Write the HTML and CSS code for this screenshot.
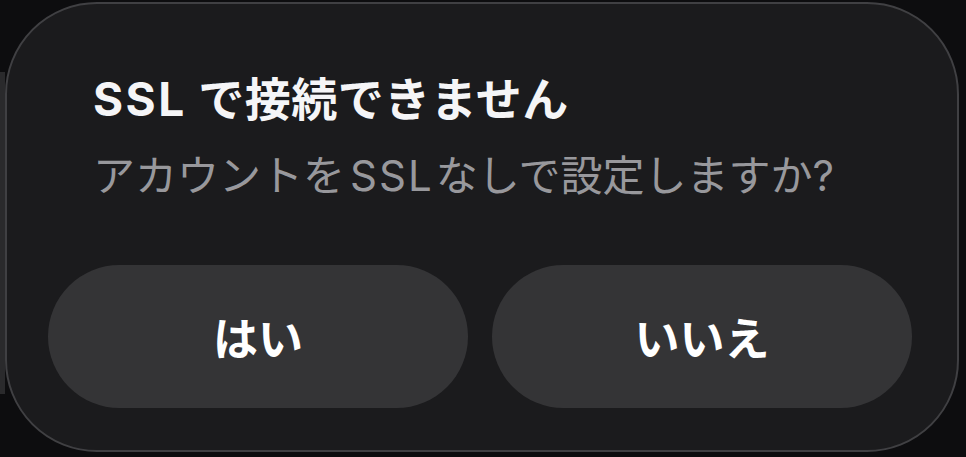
FILE: index.html
```html
<!DOCTYPE html>
<html lang="ja">
<head>
<meta charset="utf-8">
<title>SSL で接続できません</title>
<link rel="stylesheet" href="styles.css">
</head>
<body>
<div class="dialog">
  <div class="text">
    <h1 class="title"><span class="latin">SSL</span> で接続できません</h1>
    <p class="message">アカウントを<span class="latin-inline">SSL</span>なしで設定しますか?</p>
  </div>
  <div class="buttons">
    <button class="btn">はい</button>
    <button class="btn">いいえ</button>
  </div>
</div>
</body>
</html>
```
FILE: styles.css
```css
html, body {
  margin: 0;
  padding: 0;
}
body {
  width: 966px;
  height: 457px;
  overflow: hidden;
  background:
    linear-gradient(#2a2a2c, #2a2a2c) 0 72px / 5px 322px no-repeat,
    #0d0d0f;
  font-family: Inter, "Noto Sans CJK JP", sans-serif;
  padding-top: 2px;
  box-sizing: border-box;
}
.dialog {
  margin: 0 7px 0 5px;
  height: 450px;
  box-sizing: border-box;
  border: 2px solid #404043;
  border-radius: 92px;
  background: #1b1b1d;
  padding: 0 45px 42px 41px;
  display: flex;
  flex-direction: column;
}
.text {
  padding-left: 45px;
  padding-top: 66px;
}
.title {
  margin: 0;
  font-size: 46px;
  font-weight: 700;
  line-height: 58px;
  color: #f5f5f7;
  letter-spacing: 0.5px;
}
.latin {
  letter-spacing: 2.5px;
}
.message {
  margin: 20px 0 0;
  font-size: 42px;
  font-weight: 400;
  line-height: 56px;
  color: #98989c;
}
.latin-inline {
  letter-spacing: 2px;
  margin: 0 2px 0 5px;
}
.buttons {
  margin-top: auto;
  display: grid;
  grid-template-columns: 1fr 1fr;
  gap: 24px;
}
.btn {
  height: 143px;
  border: none;
  border-radius: 72px;
  background: #343436;
  color: #ffffff;
  font-family: Inter, "Noto Sans CJK JP", sans-serif;
  font-size: 45px;
  font-weight: 700;
  display: flex;
  align-items: center;
  justify-content: center;
  padding: 0;
}
```
